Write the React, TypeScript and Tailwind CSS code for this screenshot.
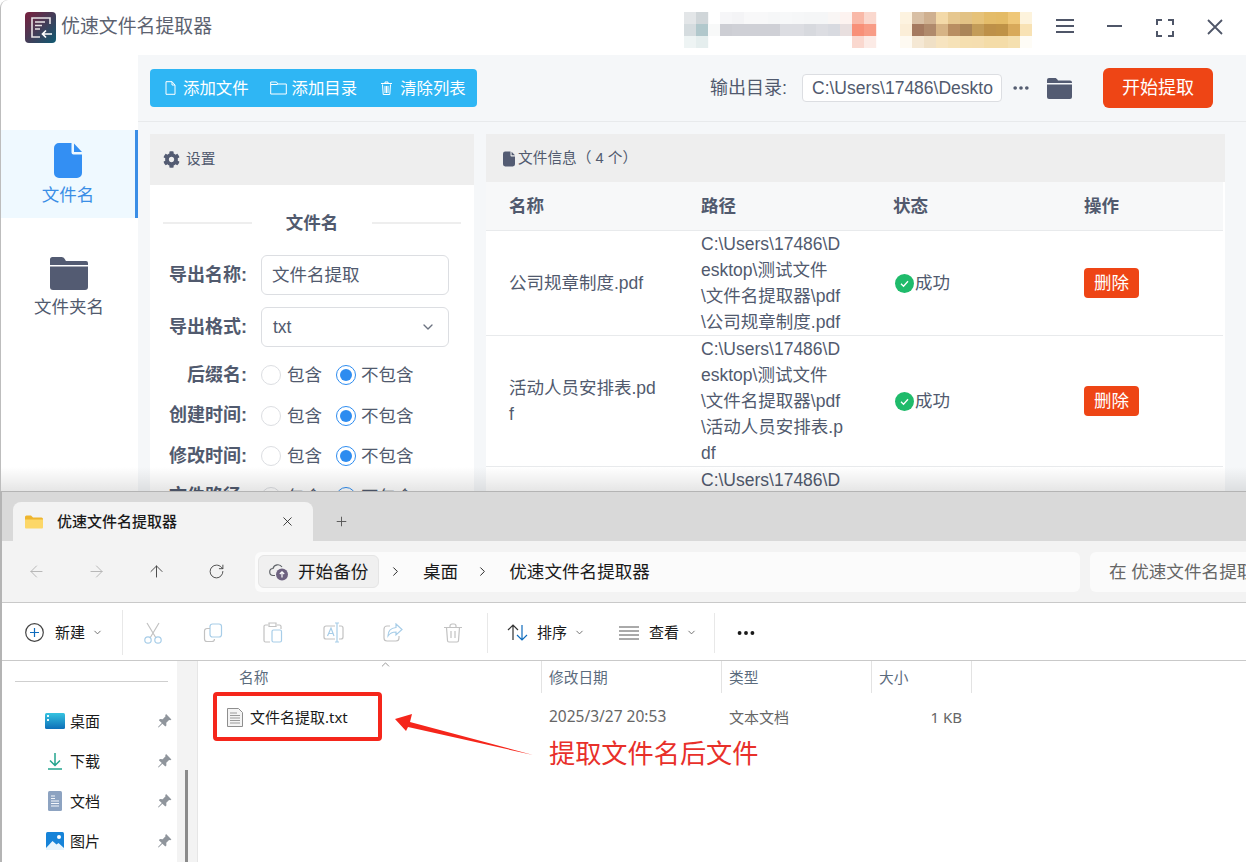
import React from "react";
import { ArrowLeft, ArrowRight, ArrowUp, ChevronDown, ChevronRight, ChevronUp, MoreHorizontal, Plus, RotateCw, X } from "lucide-react";
import { FaCog } from "react-icons/fa";

const mosaic: [number, number, string][] = [
  [2, 0, "#e3e6e8"], [3, 0, "#d0d6d9"], [5, 0, "#f6f6f8"], [6, 0, "#f4f4f6"], [7, 0, "#f8f8f9"], [8, 0, "#f8f8f9"], [9, 0, "#f6f7f8"], [10, 0, "#f7f8f9"], [11, 0, "#f6f7f8"], [12, 0, "#f5f6f7"], [13, 0, "#f5f6f7"], [14, 0, "#f9f6f5"], [15, 0, "#fdf3f0"],
  [16, 0, "#f9b9a8"], [17, 0, "#fad8ce"],
  [2, 1, "#d5dcdf"], [3, 1, "#b1c8cc"], [4, 1, "#f8f9f9"], [5, 1, "#cdced4"], [6, 1, "#cfd0d6"], [7, 1, "#cfd0d6"], [8, 1, "#cfd0d6"], [9, 1, "#cfd0d6"], [10, 1, "#dcdde2"], [11, 1, "#dcdde2"], [12, 1, "#d7d9de"], [13, 1, "#dcdde2"], [14, 1, "#d8dae0"], [15, 1, "#e8dfdf"],
  [16, 1, "#f89078"], [17, 1, "#f89c86"],
  [2, 2, "#eef4f4"], [3, 2, "#e5eeee"], [16, 2, "#fad8cf"], [17, 2, "#fcebe6"],
  [20, 0, "#fdf3e0"], [21, 0, "#d8bfa4"], [22, 0, "#cfb090"], [23, 0, "#f3d9a8"], [24, 0, "#e6c78f"], [25, 0, "#e2c285"], [26, 0, "#e6c279"], [27, 0, "#e4bc69"], [28, 0, "#e4bb66"], [29, 0, "#efc778"], [30, 0, "#fdf3dc"],
  [20, 1, "#fbeed8"], [21, 1, "#a57a60"], [22, 1, "#b08a6c"], [23, 1, "#d6b385"], [24, 1, "#b98e62"], [25, 1, "#aa8557"], [26, 1, "#c39c58"], [27, 1, "#bd9048"], [28, 1, "#bf9246"], [29, 1, "#d8a95a"], [30, 1, "#f8e2b4"],
  [20, 2, "#fefaf2"], [21, 2, "#f5e8d4"], [22, 2, "#f0e0c6"], [23, 2, "#f7e4c0"], [24, 2, "#f6e2b8"], [25, 2, "#f5dfb0"], [26, 2, "#f5deb0"], [27, 2, "#f4dca8"], [28, 2, "#f4dca8"], [29, 2, "#f5e0b0"], [30, 2, "#fefcf6"],
];

const Logo = () => (
  <svg width="31" height="31" viewBox="0 0 31 31">
    <defs>
      <linearGradient id="logo" x1="0" y1="0" x2="1" y2="1">
        <stop offset="0" stopColor="#7a1f3d" />
        <stop offset="1" stopColor="#0f5a72" />
      </linearGradient>
    </defs>
    <rect width="31" height="31" rx="4" fill="url(#logo)" />
    <path d="M25 12V6H7v19h8" fill="none" stroke="#e8e4e6" strokeWidth="1.6" />
    <path d="M10 10h10M10 13.5h7M10 17h5" stroke="#e8e4e6" strokeWidth="1.6" />
    <path d="M27 22h-9M21 18.5 17.5 22l3.5 3.5" fill="none" stroke="#fff" strokeWidth="1.7" />
  </svg>
);

const FilledFile = ({ className, fill }: { className: string; fill: string }) => (
  <svg className={className} viewBox="0 0 28 35">
    <path d="M5 0h12.5v9.5a2 2 0 0 0 2 2H28V30a5 5 0 0 1-5 5H5a5 5 0 0 1-5-5V5a5 5 0 0 1 5-5Z" fill={fill} />
    <path d="M20 .5 28 9h-8Z" fill={fill} />
  </svg>
);

const FilledFolder = ({ className }: { className: string }) => (
  <svg className={className} viewBox="0 0 38 33">
    <path d="M0 7V2.5A2.5 2.5 0 0 1 2.5 0h9c1.5 0 2.5.8 3.4 2.2l1 1.8H36a2 2 0 0 1 2 2v2H0Z" fill="#535b72" />
    <path d="M0 9.5h38V30a3 3 0 0 1-3 3H3a3 3 0 0 1-3-3Z" fill="#535b72" />
  </svg>
);

const ToolbarButton = ({ icon, label }: { icon: React.ReactNode; label: string }) => (
  <div className="flex items-center">
    {icon}
    <span>{label}</span>
  </div>
);

const Radio = ({ checked }: { checked?: boolean }) =>
  checked ? (
    <span className="flex h-5 w-5 shrink-0 items-center justify-center rounded-full border border-[#2d8cf0] bg-white">
      <span className="block h-3 w-3 rounded-full bg-[#2d8cf0]" />
    </span>
  ) : (
    <span className="block h-5 w-5 shrink-0 rounded-full border border-[#dcdee2] bg-white" />
  );

const RadioRow = ({ label }: { label: string }) => (
  <div className="flex h-[40.5px] items-center">
    <span className="w-[84px] whitespace-nowrap text-right text-[18px] font-bold">{label}</span>
    <span className="ml-[14px]"><Radio /></span>
    <span className="ml-[6px] w-[35px] whitespace-nowrap">包含</span>
    <span className="ml-[14px]"><Radio checked /></span>
    <span className="ml-[5px] whitespace-nowrap">不包含</span>
  </div>
);

const SuccessIcon = () => (
  <svg width="19" height="19" viewBox="0 0 19 19">
    <circle cx="9.5" cy="9.5" r="9.5" fill="#1fbb6b" />
    <path d="m6 9.8 2.5 2.4L13 7.2" fill="none" stroke="#fff" strokeWidth="1.3" />
  </svg>
);

const rows = [
  {
    name: ["公司规章制度.pdf"],
    path: ["C:\\Users\\17486\\D", "esktop\\测试文件", "\\文件名提取器\\pdf", "\\公司规章制度.pdf"],
  },
  {
    name: ["活动人员安排表.pd", "f"],
    path: ["C:\\Users\\17486\\D", "esktop\\测试文件", "\\文件名提取器\\pdf", "\\活动人员安排表.p", "df"],
  },
];

const Pin = () => (
  <svg width="14" height="14" viewBox="1.500 1 13 13" className="ml-auto mr-[3px]">
    <path d="M9 1 14 6l-1.2.8-1-.3-2.6 2.600.1 2.600-1 1L5.600 10 2 13.500 1.500 13 5 9.400 2.300 6.700l1-1 2.600.1L8.500 3.200l-.3-1Z" fill="#8f959c" />
  </svg>
);

const NavItem = ({ icon, label }: { icon: React.ReactNode; label: string }) => (
  <div className="flex h-10 items-center pl-[43px] pr-[2px]">
    <span className="flex w-[20px] justify-center">{icon}</span>
    <span className="ml-[5px]">{label}</span>
    <Pin />
  </div>
);

export default function App() {
  return (
    <div className="relative flex h-[862px] w-[1246px] flex-col overflow-hidden bg-white font-['Liberation_Sans','Noto_Sans_CJK_SC',sans-serif] text-[17.5px] text-[#515a6e]">
      {/* app window */}
      <div className="relative h-[491px] shrink-0 overflow-hidden rounded-tl-[8px] border-l border-[#bdbdbd]">
        <div className="flex h-[55px] items-center pl-[24px] pr-[6px]">
          <Logo />
          <span className="ml-[5px] text-[18.900px] text-[#5c6270]">优速文件名提取器</span>
          <svg width="348" height="36" viewBox="24 0 348 36" className="ml-auto mt-[5px]">
            {mosaic.map(([c, r, color]) => (
              <rect key={`${c}-${r}`} x={c * 12} y={r * 12} width="12.2" height="12" fill={color} />
            ))}
          </svg>
          <div className="ml-[8px] flex text-[#4f5668]">
            <div className="flex w-[50px] justify-center">
              <svg width="20" height="16" viewBox="0 0 20 16"><path d="M1 2h18M1 8h18M1 14h18" stroke="#4f5668" strokeWidth="2" /></svg>
            </div>
            <div className="flex w-[50px] justify-center">
              <svg width="20" height="16" viewBox="0 0 20 16"><path d="M2 8h15" stroke="#4f5668" strokeWidth="2" /></svg>
            </div>
            <div className="flex w-[50px] justify-center">
              <svg width="20" height="20" viewBox="0 0 20 20"><path d="M2 7V2h5M13 2h5v5M18 13v5h-5M7 18H2v-5" fill="none" stroke="#4f5668" strokeWidth="2" /></svg>
            </div>
            <div className="flex w-[50px] justify-center">
              <svg width="18" height="18" viewBox="0 0 18 18"><path d="m2 2 14 14M16 2 2 16" stroke="#4f5668" strokeWidth="1.800" /></svg>
            </div>
          </div>
        </div>

        <div className="flex h-[436px]">
          <div className="w-[137px] shrink-0 pt-[75px]">
            <div className="flex h-[88px] flex-col items-center border-r-[3px] border-[#3a8ee6] bg-[#eff9ff] pt-[13px] text-[#3a8ee6]">
              <FilledFile className="h-[35px] w-[28px]" fill="#338ff3" />
              <span className="mt-[4px] leading-[26px]">文件名</span>
            </div>
            <div className="mt-[39px] flex flex-col items-center pr-[1px]">
              <FilledFolder className="h-[33px] w-[38px]" />
              <span className="mt-[4px] leading-[26px]">文件夹名</span>
            </div>
          </div>

          <div className="flex min-w-0 flex-1 flex-col bg-[#f5f7f9]">
            <div className="flex h-[67px] shrink-0 items-center border-b border-[#e8eaec] pl-[12px] pr-[33px]">
              <div className="flex h-[38px] w-[327px] items-center rounded-[4px] bg-[#2fb6f4] pl-[15px] text-[16.400px] text-white">
                <ToolbarButton
                  label="添加文件"
                  icon={<svg width="11" height="14" viewBox="0 0 11 14" className="mr-[7px]"><path d="M1 .7h6l3 3.300v9.300H1ZM7 .7V4h3" fill="none" stroke="#fff" /></svg>}
                />
                <div className="ml-[21px]">
                  <ToolbarButton
                    label="添加目录"
                    icon={<svg width="17" height="14" viewBox="0 0 17 14" className="mr-[5px]"><path d="M.7 1h5.800l1.200 2h8.600v10H.7ZM.7 3.500h7" fill="none" stroke="#fff" /></svg>}
                  />
                </div>
                <div className="ml-[24px]">
                  <ToolbarButton
                    label="清除列表"
                    icon={<svg width="11" height="14" viewBox="0 0 11 14" className="mr-[8px]"><path d="M0 2.500h11M4 2.500V1h3v1.500M1.500 3.500l.7 10h6.600l.7-10M4 5v7M5.500 5v7M7 5v7" fill="none" stroke="#fff" /></svg>}
                  />
                </div>
              </div>
              <span className="ml-auto text-[18px]">输出目录:</span>
              <div className="ml-[15px] flex h-[28px] w-[200px] items-center overflow-hidden rounded-[4px] border border-[#dcdee2] bg-white pl-[9px] whitespace-nowrap">
                C:\Users\17486\Deskto
              </div>
              <MoreHorizontal size={20} className="ml-[9px]" strokeWidth={2.400} />
              <svg width="25" height="21" viewBox="0 0 25 21" className="ml-[16px]">
                <path d="M0 5V2a2 2 0 0 1 2-2h6c1 0 1.800.6 2.400 1.500l.6 1h12a2 2 0 0 1 2 2V5Z" fill="#535b72" />
                <path d="M0 6.500h25V19a2 2 0 0 1-2 2H2a2 2 0 0 1-2-2Z" fill="#535b72" />
              </svg>
              <div className="ml-[31px] flex h-[40px] w-[110px] items-center justify-center rounded-[6px] bg-[#ee4515] text-[18px] text-white">开始提取</div>
            </div>

            <div className="flex min-h-0 flex-1 gap-[12px] pl-[12px] pt-[12px]">
              <div className="w-[324px] shrink-0 bg-white">
                <div className="flex h-[51px] items-center bg-[#eeeeee] pl-[13px] text-[14.700px]">
                  <FaCog size={17} color="#535b72" />
                  <span className="ml-[6px]">设置</span>
                </div>
                <div className="mt-[28px] flex h-[20px] items-center px-[13px]">
                  <span className="h-[2px] w-[89px] bg-[#eeeeee]" />
                  <span className="flex-1 text-center font-bold">文件名</span>
                  <span className="h-[2px] w-[89px] bg-[#eeeeee]" />
                </div>
                <div className="px-[13px]">
                  <div className="mt-[22px] flex items-center">
                    <span className="w-[84px] whitespace-nowrap text-right text-[18px] font-bold">导出名称:</span>
                    <div className="ml-[14px] flex h-[40px] w-[188px] items-center rounded-[6px] border border-[#dcdee2] pl-[10px]">文件名提取</div>
                  </div>
                  <div className="mt-[12px] flex items-center">
                    <span className="w-[84px] whitespace-nowrap text-right text-[18px] font-bold">导出格式:</span>
                    <div className="ml-[14px] flex h-[40px] w-[188px] items-center justify-between rounded-[6px] border border-[#dcdee2] pl-[11px] pr-[12px]">
                      txt
                      <ChevronDown size={16} color="#6b7280" />
                    </div>
                  </div>
                  <div className="mt-[8px]">
                    <RadioRow label="后缀名:" />
                    <RadioRow label="创建时间:" />
                    <RadioRow label="修改时间:" />
                    <RadioRow label="文件路径:" />
                  </div>
                </div>
              </div>

              <div className="w-[739px] shrink-0 bg-white">
                <div className="flex h-[48px] items-center bg-[#eeeeee] pl-[17px] pt-[1px] text-[14.700px]">
                  <FilledFile className="h-[16px] w-[12px]" fill="#535b72" />
                  <span className="ml-[3px] whitespace-pre">文件信息（ 4 个）</span>
                </div>
                <div className="grid h-[49px] w-[737px] grid-cols-[215px_192px_191px_1fr] items-center border-b border-[#e8eaec] bg-[#f7f8f9] font-bold">
                  <span className="pl-[23px]">名称</span>
                  <span>路径</span>
                  <span>状态</span>
                  <span>操作</span>
                </div>
                {rows.map((row, i) => (
                  <div key={i} className="grid w-[737px] grid-cols-[215px_192px_191px_1fr] items-center border-b border-[#e8eaec] leading-[26px]">
                    <div className="whitespace-nowrap pl-[23px]">
                      {row.name.map((line) => <div key={line}>{line}</div>)}
                    </div>
                    <div className="whitespace-nowrap">
                      {row.path.map((line) => <div key={line}>{line}</div>)}
                    </div>
                    <div className="flex items-center pl-[2px]">
                      <SuccessIcon />
                      <span className="ml-[1px]">成功</span>
                    </div>
                    <div className="flex h-[30px] w-[55px] items-center justify-center rounded-[4px] bg-[#ee4515] text-white">删除</div>
                  </div>
                ))}
                <div className="pl-[215px] leading-[26px]">C:\Users\17486\D</div>
              </div>
            </div>
          </div>
        </div>
        <div className="absolute inset-x-0 bottom-0 h-[24px] bg-gradient-to-b from-transparent to-black/10" />
      </div>

      {/* file explorer */}
      <div className="flex min-h-0 flex-1 flex-col border-l-2 border-t border-[#b4b4b4] bg-white font-['Noto_Sans','Noto_Sans_CJK_SC',sans-serif] text-[15px] text-[#1a1a1a]">
        <div className="flex h-[49px] shrink-0 items-end bg-[#d9d9d9] pl-[11px]">
          <div className="flex h-[39px] w-[300px] items-center rounded-t-[8px] bg-[#f3f3f3] pl-[12px] pr-[18px]">
            <svg width="18" height="14" viewBox="0 0 18 14">
              <path d="M0 2a1.500 1.500 0 0 1 1.500-1.500h4.500l2 2h8.500A1.500 1.500 0 0 1 18 4v1H0Z" fill="#eeb52e" />
              <path d="M0 4.500h18V12.500a1 1 0 0 1-1 1H1a1 1 0 0 1-1-1Z" fill="#fcd768" />
            </svg>
            <span className="ml-[14px] font-medium">优速文件名提取器</span>
            <X size={15} className="ml-auto" strokeWidth={1.300} />
          </div>
          <Plus size={15} className="mb-[12px] ml-[21px] text-[#555]" strokeWidth={1.500} />
        </div>

        <div className="flex h-[62px] shrink-0 items-center overflow-hidden border-b border-[#c9c9c9] bg-[#f3f3f3] pl-[4px] text-[17.600px]">
          <div className="flex w-[60px] shrink-0 justify-center"><ArrowLeft size={19} strokeWidth={1.200} color="#b4b4b4" /></div>
          <div className="flex w-[60px] shrink-0 justify-center"><ArrowRight size={19} strokeWidth={1.200} color="#b4b4b4" /></div>
          <div className="flex w-[60px] shrink-0 justify-center"><ArrowUp size={19} strokeWidth={1.200} color="#444" /></div>
          <div className="flex w-[60px] shrink-0 justify-center"><RotateCw size={17} strokeWidth={1.300} color="#444" /></div>
          <div className="ml-[9px] flex h-[40px] w-[825px] shrink-0 items-center rounded-[6px] bg-[#fbfbfb] pl-[3px]">
            <div className="flex h-[33px] w-[121px] items-center rounded-[6px] border border-[#e5e5e5] bg-[#f0f0f0] pl-[10px]">
              <svg width="20" height="20" viewBox="0 0 20 20">
                <path d="M6 13.500H4.500a3.500 3.500 0 0 1-.5-7A5 5 0 0 1 13 5" fill="none" stroke="#5f6368" strokeWidth="1.200" />
                <circle cx="13" cy="12.500" r="6" fill="#6e6280" />
                <path d="M13 15.500v-5.500M10.800 12 13 9.800l2.200 2.200" fill="none" stroke="#fff" strokeWidth="1.200" />
              </svg>
              <span className="ml-[9px]">开始备份</span>
            </div>
            <ChevronRight size={15} className="ml-[9px]" strokeWidth={1.500} />
            <span className="ml-[20px]">桌面</span>
            <ChevronRight size={15} className="ml-[17px]" strokeWidth={1.500} />
            <span className="ml-[19px] whitespace-nowrap">优速文件名提取器</span>
          </div>
          <div className="ml-[10px] flex h-[40px] w-[200px] shrink-0 items-center rounded-[6px] bg-[#fbfbfb] pl-[19px] text-[#666] whitespace-nowrap">
            在 优速文件名提取器
          </div>
        </div>

        <div className="flex h-[58px] shrink-0 items-center border-b border-[#c9c9c9] pt-[2px]">
          <div className="flex w-[121px] shrink-0 items-center border-r border-[#e8e8e8] py-[11px] pl-[23px]">
            <svg width="19" height="19" viewBox="0 0 19 19">
              <circle cx="9.500" cy="9.500" r="8.800" fill="none" stroke="#444" strokeWidth="1.200" />
              <path d="M9.500 5v9M5 9.500h9" stroke="#0f6cbd" strokeWidth="1.200" />
            </svg>
            <span className="ml-[11px]">新建</span>
            <ChevronDown size={11} className="ml-[7px]" color="#666" />
          </div>
          <div className="flex w-[60px] shrink-0 justify-center">
            <svg width="20" height="22" viewBox="0 0 20 22" fill="none">
              <path d="M4 1 13 16M16 1 7 16" stroke="#c2c2c2" strokeWidth="1.200" />
              <circle cx="5" cy="18" r="3.200" stroke="#a7cde8" strokeWidth="1.200" />
              <circle cx="15" cy="18" r="3.200" stroke="#a7cde8" strokeWidth="1.200" />
            </svg>
          </div>
          <div className="flex w-[60px] shrink-0 justify-center">
            <svg width="20" height="20" viewBox="0 0 20 20" fill="none">
              <rect x="7" y="1" width="11.500" height="13" rx="2.500" stroke="#a7cde8" strokeWidth="1.200" />
              <path d="M7 5.500H4A2.500 2.500 0 0 0 1.500 8v8A2.500 2.500 0 0 0 4 18.500h5A2.500 2.500 0 0 0 11.500 16" stroke="#c2c2c2" strokeWidth="1.200" />
            </svg>
          </div>
          <div className="flex w-[60px] shrink-0 justify-center">
            <svg width="20" height="21" viewBox="0 0 20 21" fill="none">
              <path d="M5 3H2.500A1.500 1.500 0 0 0 1 4.500v14A1.500 1.500 0 0 0 2.500 20H7M14 3h2.500A1.500 1.500 0 0 1 18 4.500V7M6 1h7v3.500H6Z" stroke="#c2c2c2" strokeWidth="1.200" />
              <rect x="9" y="8" width="9.500" height="12" rx="1.500" stroke="#a7cde8" strokeWidth="1.200" />
            </svg>
          </div>
          <div className="flex w-[60px] shrink-0 justify-center">
            <svg width="21" height="21" viewBox="0 0 21 21" fill="none">
              <path d="M12 4H3a2 2 0 0 0-2 2v9a2 2 0 0 0 2 2h9M16 4h2a2 2 0 0 1 2 2v9a2 2 0 0 1-2 2h-2" stroke="#c2c2c2" strokeWidth="1.200" />
              <path d="M14 1v19M12 1h4M12 20h4M4.500 14 8 6l3 8M5.700 11.500h4.500" stroke="#a7cde8" strokeWidth="1.200" />
            </svg>
          </div>
          <div className="flex w-[60px] shrink-0 justify-center">
            <svg width="20" height="20" viewBox="0 0 20 20" fill="none">
              <path d="M7 3H4a3 3 0 0 0-3 3v9a3 3 0 0 0 3 3h9a3 3 0 0 0 3-3v-2" stroke="#c2c2c2" strokeWidth="1.200" />
              <path d="M13 1l6 5.500-6 5.500V9c-4 0-6 1-8 4 0-5 3-8 8-8.500Z" stroke="#a7cde8" strokeWidth="1.200" />
            </svg>
          </div>
          <div className="flex w-[60px] shrink-0 justify-center">
            <svg width="18" height="20" viewBox="0 0 18 20" fill="none" stroke="#c2c2c2" strokeWidth="1.200">
              <path d="M0 4.500h18M6 4.500V3a2 2 0 0 1 2-2h2a2 2 0 0 1 2 2v1.500M2.500 4.500l1 13a1.500 1.500 0 0 0 1.500 1.500h8a1.500 1.500 0 0 0 1.500-1.500l1-13M7 8v7M11 8v7" />
            </svg>
          </div>
          <div className="ml-[4px] flex h-[40px] shrink-0 items-center border-l border-[#e8e8e8] pl-[19px]">
            <svg width="21" height="17" viewBox="0 0 21 17" fill="none" strokeWidth="1.200">
              <path d="M6 16V1M1 6l5-5 5 5" stroke="#333" />
              <path d="M15 1v15M10 11l5 5 5-5" stroke="#0f6cbd" />
            </svg>
            <span className="ml-[9px]">排序</span>
            <ChevronDown size={11} className="ml-[7px]" color="#666" />
            <svg width="20" height="14" viewBox="0 0 20 14" className="ml-[34px]">
              <path d="M0 1h20M0 5h20M0 9h20M0 13h20" stroke="#555" strokeWidth="1" />
            </svg>
            <span className="ml-[10px]">查看</span>
            <ChevronDown size={11} className="ml-[7px]" color="#666" />
          </div>
          <div className="ml-[17px] flex h-[40px] shrink-0 items-center border-l border-[#e8e8e8] pl-[20px]">
            <MoreHorizontal size={22} strokeWidth={2.200} />
          </div>
        </div>

        <div className="flex min-h-0 flex-1">
          <div className="w-[175px] shrink-0 pt-[20px]">
            <div className="ml-[13px] mr-[9px] h-px bg-[#cfcfcf]" />
            <div className="mt-[19px]">
              <NavItem
                label="桌面"
                icon={
                  <svg width="20" height="16" viewBox="0 0 20 16">
                    <defs><linearGradient id="desk" x1="0" y1="0" x2="0" y2="1"><stop offset="0" stopColor="#35c3e0" /><stop offset="1" stopColor="#0d6fb8" /></linearGradient></defs>
                    <rect width="20" height="16" rx="1.500" fill="url(#desk)" />
                    <rect x="2" y="2" width="2" height="2" fill="#e6fbff" />
                    <rect x="2" y="6" width="2" height="2" fill="#e6fbff" />
                  </svg>
                }
              />
              <NavItem
                label="下载"
                icon={<svg width="14" height="17" viewBox="0 0 14 17" fill="none" stroke="#25a58e" strokeWidth="1.500"><path d="M7 0v12M2 7.500l5 5 5-5M0 16h14" /></svg>}
              />
              <NavItem
                label="文档"
                icon={
                  <svg width="14" height="20" viewBox="0 0 14 20">
                    <rect width="14" height="20" rx="1.500" fill="#8da3c1" />
                    <path d="M3 5h4M3 7.500h4M3 10h8M3 12.500h8M3 15h8" stroke="#f4f7fb" strokeWidth="1" />
                  </svg>
                }
              />
              <NavItem
                label="图片"
                icon={
                  <svg width="18" height="18" viewBox="0 0 18 18">
                    <rect width="18" height="18" rx="1.500" fill="#1683d8" />
                    <circle cx="13" cy="5" r="2" fill="#fff" />
                    <path d="M0 16 6.500 9l4 3.500 2-1.500 5.500 5v2H0Z" fill="#e6f4fd" />
                  </svg>
                }
              />
            </div>
          </div>
          <div className="h-full w-[21px] shrink-0 border-r border-[#e6e6e6] bg-[#f3f3f3] pl-[8px] pt-[109px]">
            <div className="h-full w-[3px] bg-[#8b8b8b]" />
          </div>
          <div className="relative min-w-0 flex-1">
            <ChevronUp size={13} className="absolute left-[181px] top-[-3px] text-[#666]" strokeWidth={1.200} />
            <div className="grid h-[32px] grid-cols-[343px_180px_150px_101px] items-center text-[14.700px] text-[#5b6b7d]">
              <span className="pl-[41px]">名称</span>
              <span className="flex h-full items-center border-l border-[#e3e3e3] pl-[7px]">修改日期</span>
              <span className="flex h-full items-center border-l border-[#e3e3e3] pl-[7px]">类型</span>
              <span className="flex h-full items-center border-x border-[#e3e3e3] pl-[7px]">大小</span>
            </div>
            <div className="mt-[4px] grid h-[40px] grid-cols-[343px_180px_150px_100px] items-center text-[#666]">
              <div className="flex items-center pl-[29px] text-[#1a1a1a]">
                <svg width="16" height="19" viewBox="0 0 16 19" fill="none">
                  <path d="M.5.500h11l4 4v14H.5Z" fill="#f4f4f4" stroke="#8e8e8e" />
                  <path d="M3 5h7M3 7.500h10M3 10h10M3 12.500h10M3 15h10" stroke="#9a9a9a" />
                </svg>
                <span className="ml-[7px]">文件名提取.txt</span>
              </div>
              <span className="pl-[8px] text-[15.500px]">2025/3/27 20:53</span>
              <span className="pl-[8px]">文本文档</span>
              <span className="pr-[9px] text-right">1 KB</span>
            </div>
          </div>
        </div>
      </div>

      {/* red annotation over the explorer */}
      <div className="absolute left-[213px] top-[692px] h-[49px] w-[169px] rounded-[4px] border-[4px] border-[#f5261b]" />
      <svg className="absolute left-[390px] top-[710px]" width="150" height="50" viewBox="0 0 150 50">
        <path d="M5 9 22 4 20 12 143 45 18 17 16 21Z" fill="#f5261b" />
      </svg>
      <span className="absolute left-[549px] top-[736px] text-[26.200px] leading-[36px] text-[#e8302a]">提取文件名后文件</span>
    </div>
  );
}
